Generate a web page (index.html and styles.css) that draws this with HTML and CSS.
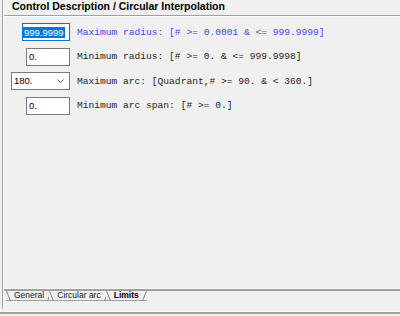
FILE: index.html
```html
<!DOCTYPE html>
<html>
<head>
  <meta charset="utf-8">
  <link rel="stylesheet" href="styles.css">
</head>
<body>
  <div class="panel">
    <div class="title">Control Description / Circular Interpolation</div>

    <div class="fields">
      <div class="row">
        <div class="field field-focus"><span class="sel">999.9999</span></div>
        <div class="hint hint-active">Maximum radius: [# &gt;= 0.0001 &amp; &lt;= 999.9999]</div>
      </div>
      <div class="row">
        <div class="field">0.</div>
        <div class="hint">Minimum radius: [# &gt;= 0. &amp; &lt;= 999.9998]</div>
      </div>
      <div class="row">
        <div class="field combo">
          <span>180.</span>
          <svg class="chevron" width="7" height="4" viewBox="0 0 7 4"><path d="M0.5 0.5 L3.5 3.5 L6.5 0.5" fill="none" stroke="#505050" stroke-width="1"/></svg>
        </div>
        <div class="hint">Maximum arc: [Quadrant,# &gt;= 90. &amp; &lt; 360.]</div>
      </div>
      <div class="row">
        <div class="field">0.</div>
        <div class="hint">Minimum arc span: [# &gt;= 0.]</div>
      </div>
    </div>

    <div class="tabs">
      <div class="tab">General</div>
      <div class="tab">Circular arc</div>
      <div class="tab tab-active">Limits</div>
    </div>
  </div>
  <div class="footer"></div>
</body>
</html>
```

FILE: styles.css
```css
body {
  margin: 0;
  width: 400px;
  height: 316px;
  overflow: hidden;
  background: #f0f0f0;
  font-family: 'Liberation Sans', Arial, sans-serif;
  color: #000;
}

.panel {
  height: 309px;
  margin-left: 2px;
  border-left: 1px solid #a0a0a0;
  box-shadow: inset 1px 0 #fff;
  display: flex;
  flex-direction: column;
}

.title {
  height: 15px;
  padding-left: 8px;
  margin-left: 1px;
  font-size: 10.5px;
  font-weight: bold;
  line-height: 13px;
  border-bottom: 1px solid #a0a0a0;
  box-shadow: 0 1px #fff;
}

.fields {
  padding-top: 7px;
  display: flex;
  flex-direction: column;
  gap: 6.5px;
}

.row {
  display: grid;
  grid-template-columns: 67px auto;
  column-gap: 7px;
  align-items: center;
  height: 18px;
}

.field {
  justify-self: end;
  box-sizing: border-box;
  width: 44px;
  height: 18px;
  padding: 0 2px;
  background: #fff;
  border: 1px solid #7a7a7a;
  font-size: 9.5px;
  line-height: 16px;
  white-space: nowrap;
}

.field-focus {
  width: 48px;
  padding: 0;
  border-color: #0078d7;
}

.sel {
  display: inline-block;
  padding: 0 1px;
  line-height: 11px;
  background: #0078d7;
  color: #fff;
  vertical-align: middle;
}

.combo {
  width: 59px;
  display: flex;
  align-items: center;
  justify-content: space-between;
  padding: 0 5px 0 2px;
}

.chevron {
  display: block;
}

.hint {
  font-family: 'Liberation Mono', 'Courier New', monospace;
  font-size: 9.6px;
  color: #262626;
  white-space: nowrap;
}

.hint-active {
  color: #4646e6;
}

.tabs {
  margin-top: auto;
  margin-bottom: 8px;
  margin-left: 1px;
  height: 12px;
  box-sizing: border-box;
  border-top: 2px solid #a0a0a0;
  box-shadow: 0 -1px #fbfbfb;
  display: flex;
  padding-left: 2px;
}

.tab {
  position: relative;
  height: 10px;
  box-sizing: border-box;
  padding: 0 8px;
  margin-right: -3px;
  font-size: 8.5px;
  line-height: 9px;
  color: #202020;
  border-bottom: 1px solid #a0a0a0;
  background: #f0f0f0;
}

.tab::before,
.tab::after {
  content: '';
  position: absolute;
  top: 0;
  bottom: -1px;
  width: 0;
  border-left: 1px solid #808080;
}

.tab::before {
  left: 2px;
  transform: skewX(22deg);
}

.tab::after {
  right: 2px;
  transform: skewX(-22deg);
}

.tab-active {
  font-weight: bold;
  color: #000;
}

.footer {
  margin-top: 2px;
  height: 1px;
  background: #fff;
  border-bottom: 2px solid #a0a0a0;
}
```
